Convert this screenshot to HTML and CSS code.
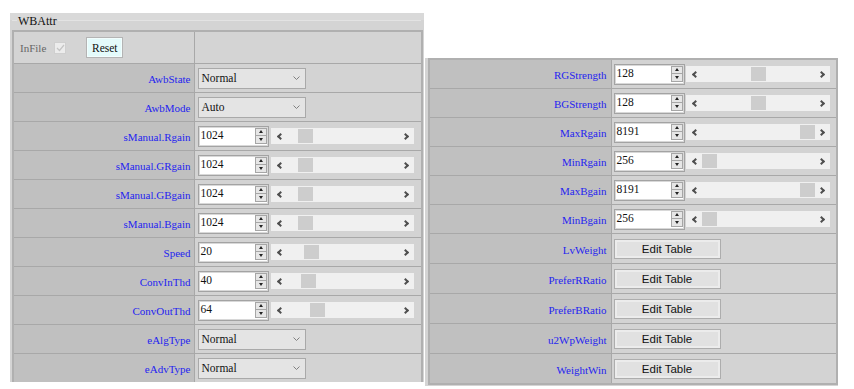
FILE: index.html
```html
<!DOCTYPE html>
<html lang="en">
<head>
    <meta charset="UTF-8">
    <title>WBAttr</title>
    <link rel="stylesheet" href="styles.css">
</head>
<body>
<div class="page">
    <!-- left column of the WB attribute block -->
    <div class="panel left-panel">
        <div class="legend"><span class="legend-line short"></span><span class="legend-text">WBAttr</span><span class="legend-line"></span></div>
        <table class="attr-table">
            <colgroup><col class="col-label"><col class="col-value"></colgroup>
            <tr class="head-row">
                <td class="head-cell">
                    <div class="head-items">
                        <span class="infile">InFile</span>
                        <span class="chk"><svg width="9" height="8" viewBox="0 0 9 8"><polyline points="1,4 3.5,6.5 8,1" fill="none" stroke="#c4c4c4" stroke-width="1.2"/></svg></span>
                        <button class="reset-btn">Reset</button>
                    </div>
                </td>
                <td class="head-value"></td>
            </tr>
            <tr>
                <td class="lbl">AwbState</td>
                <td class="val"><div class="select"><span>Normal</span><svg width="7" height="4" viewBox="0 0 7 4"><polyline points="0.5,0.5 3.5,3.5 6.5,0.5" fill="none" stroke="#808080" stroke-width="1"/></svg></div></td>
            </tr>
            <tr>
                <td class="lbl">AwbMode</td>
                <td class="val"><div class="select"><span>Auto</span><svg width="7" height="4" viewBox="0 0 7 4"><polyline points="0.5,0.5 3.5,3.5 6.5,0.5" fill="none" stroke="#808080" stroke-width="1"/></svg></div></td>
            </tr>
            <tr>
                <td class="lbl">sManual.Rgain</td>
                <td class="val"><div class="num-row"><div class="num-box"><span class="num-val">1024</span><span class="spin"><i class="up"></i><i class="down"></i></span></div><div class="bar"><span class="arr left"></span><span class="thumb" style="left:27px"></span><span class="arr right"></span></div></div></td>
            </tr>
            <tr>
                <td class="lbl">sManual.GRgain</td>
                <td class="val"><div class="num-row"><div class="num-box"><span class="num-val">1024</span><span class="spin"><i class="up"></i><i class="down"></i></span></div><div class="bar"><span class="arr left"></span><span class="thumb" style="left:27px"></span><span class="arr right"></span></div></div></td>
            </tr>
            <tr>
                <td class="lbl">sManual.GBgain</td>
                <td class="val"><div class="num-row"><div class="num-box"><span class="num-val">1024</span><span class="spin"><i class="up"></i><i class="down"></i></span></div><div class="bar"><span class="arr left"></span><span class="thumb" style="left:27px"></span><span class="arr right"></span></div></div></td>
            </tr>
            <tr>
                <td class="lbl">sManual.Bgain</td>
                <td class="val"><div class="num-row"><div class="num-box"><span class="num-val">1024</span><span class="spin"><i class="up"></i><i class="down"></i></span></div><div class="bar"><span class="arr left"></span><span class="thumb" style="left:27px"></span><span class="arr right"></span></div></div></td>
            </tr>
            <tr>
                <td class="lbl">Speed</td>
                <td class="val"><div class="num-row"><div class="num-box"><span class="num-val">20</span><span class="spin"><i class="up"></i><i class="down"></i></span></div><div class="bar"><span class="arr left"></span><span class="thumb" style="left:33px"></span><span class="arr right"></span></div></div></td>
            </tr>
            <tr>
                <td class="lbl">ConvInThd</td>
                <td class="val"><div class="num-row"><div class="num-box"><span class="num-val">40</span><span class="spin"><i class="up"></i><i class="down"></i></span></div><div class="bar"><span class="arr left"></span><span class="thumb" style="left:30px"></span><span class="arr right"></span></div></div></td>
            </tr>
            <tr>
                <td class="lbl">ConvOutThd</td>
                <td class="val"><div class="num-row"><div class="num-box"><span class="num-val">64</span><span class="spin"><i class="up"></i><i class="down"></i></span></div><div class="bar"><span class="arr left"></span><span class="thumb" style="left:39px"></span><span class="arr right"></span></div></div></td>
            </tr>
            <tr>
                <td class="lbl">eAlgType</td>
                <td class="val"><div class="select"><span>Normal</span><svg width="7" height="4" viewBox="0 0 7 4"><polyline points="0.5,0.5 3.5,3.5 6.5,0.5" fill="none" stroke="#808080" stroke-width="1"/></svg></div></td>
            </tr>
            <tr>
                <td class="lbl">eAdvType</td>
                <td class="val"><div class="select"><span>Normal</span><svg width="7" height="4" viewBox="0 0 7 4"><polyline points="0.5,0.5 3.5,3.5 6.5,0.5" fill="none" stroke="#808080" stroke-width="1"/></svg></div></td>
            </tr>
        </table>
    </div>

    <!-- right column -->
    <div class="panel right-panel">
        <table class="attr-table">
            <colgroup><col class="col-label-r"><col class="col-value-r"></colgroup>
            <tr>
                <td class="lbl">RGStrength</td>
                <td class="val"><div class="num-row"><div class="num-box"><span class="num-val">128</span><span class="spin"><i class="up"></i><i class="down"></i></span></div><div class="bar wide"><span class="arr left"></span><span class="thumb" style="left:65px"></span><span class="arr right"></span></div></div></td>
            </tr>
            <tr>
                <td class="lbl">BGStrength</td>
                <td class="val"><div class="num-row"><div class="num-box"><span class="num-val">128</span><span class="spin"><i class="up"></i><i class="down"></i></span></div><div class="bar wide"><span class="arr left"></span><span class="thumb" style="left:65px"></span><span class="arr right"></span></div></div></td>
            </tr>
            <tr>
                <td class="lbl">MaxRgain</td>
                <td class="val"><div class="num-row"><div class="num-box"><span class="num-val">8191</span><span class="spin"><i class="up"></i><i class="down"></i></span></div><div class="bar wide"><span class="arr left"></span><span class="thumb" style="left:114px"></span><span class="arr right"></span></div></div></td>
            </tr>
            <tr>
                <td class="lbl">MinRgain</td>
                <td class="val"><div class="num-row"><div class="num-box"><span class="num-val">256</span><span class="spin"><i class="up"></i><i class="down"></i></span></div><div class="bar wide"><span class="arr left"></span><span class="thumb" style="left:16px"></span><span class="arr right"></span></div></div></td>
            </tr>
            <tr>
                <td class="lbl">MaxBgain</td>
                <td class="val"><div class="num-row"><div class="num-box"><span class="num-val">8191</span><span class="spin"><i class="up"></i><i class="down"></i></span></div><div class="bar wide"><span class="arr left"></span><span class="thumb" style="left:114px"></span><span class="arr right"></span></div></div></td>
            </tr>
            <tr>
                <td class="lbl">MinBgain</td>
                <td class="val"><div class="num-row"><div class="num-box"><span class="num-val">256</span><span class="spin"><i class="up"></i><i class="down"></i></span></div><div class="bar wide"><span class="arr left"></span><span class="thumb" style="left:16px"></span><span class="arr right"></span></div></div></td>
            </tr>
            <tr class="btn-row">
                <td class="lbl">LvWeight</td>
                <td class="val"><button class="edit-btn">Edit Table</button></td>
            </tr>
            <tr class="btn-row">
                <td class="lbl">PreferRRatio</td>
                <td class="val"><button class="edit-btn">Edit Table</button></td>
            </tr>
            <tr class="btn-row">
                <td class="lbl">PreferBRatio</td>
                <td class="val"><button class="edit-btn">Edit Table</button></td>
            </tr>
            <tr class="btn-row">
                <td class="lbl">u2WpWeight</td>
                <td class="val"><button class="edit-btn">Edit Table</button></td>
            </tr>
            <tr class="btn-row">
                <td class="lbl">WeightWin</td>
                <td class="val"><button class="edit-btn">Edit Table</button></td>
            </tr>
        </table>
    </div>
</div>
</body>
</html>
```

FILE: styles.css
```css
body {
    margin: 0;
    padding: 13px 0 0 10px;
    background: white;
    font-family: "Liberation Serif", "Times New Roman", serif;
}
.page {
    display: flex;
    align-items: flex-start;
    gap: 1px;
}
.panel {
    background-color: #d4d4d4;
}
.left-panel {
    width: 414px;
    height: 369px;
    overflow: hidden;
    box-sizing: border-box;
    padding: 0 3px 0 2px;
    background: linear-gradient(#d9d9d9 0, #d9d9d9 7px, #d4d4d4 7px);
}
.legend {
    display: flex;
    align-items: center;
    height: 17px;
}
.legend-line {
    flex: 1;
    height: 1px;
    background-color: #e3e3e3;
    margin-top: -2px;
}
.legend-line.short {
    flex: none;
    width: 5px;
}
.legend-text {
    font-size: 12px;
    color: #111;
    padding: 0 1px;
}
.right-panel {
    margin-top: 45px;
    width: 413px;
    box-sizing: border-box;
    padding: 0 2px 1px 3px;
}
.attr-table {
    border-collapse: collapse;
    table-layout: fixed;
    border: 2px solid #b0b0b0;
    font-size: 11px;
    line-height: 12px;
}
.left-panel .attr-table {
    width: 409px;
}
.right-panel .attr-table {
    width: 408px;
}
.col-label { width: 181px; }
.col-value { width: 228px; }
.col-label-r { width: 182px; }
.col-value-r { width: 226px; }
.attr-table td {
    border: 1px solid #a8a8a8;
    height: 26px;
    padding: 0;
}
.head-row td {
    height: 31px;
    background-color: #d4d4d4;
}
.head-items {
    display: flex;
    align-items: center;
    padding-left: 6px;
}
.infile {
    font-size: 11px;
    color: #666;
}
.chk {
    display: flex;
    align-items: center;
    justify-content: center;
    width: 10px;
    height: 10px;
    margin-left: 8px;
    border: 1px solid #cfcfcf;
    background-color: #ececec;
}
.reset-btn {
    margin-left: 20px;
    width: 37px;
    height: 21px;
    padding: 0;
    font-family: "Liberation Serif", "Times New Roman", serif;
    font-size: 11.5px;
    color: #111;
    background-color: #e4fbfb;
    border: 1px solid #b4b4b4;
    box-shadow: inset 0 0 0 1px #f2fefe;
}
.attr-table td.lbl {
    background-color: #c0c0c0;
    text-align: right;
    color: #2424f0;
    padding: 2px 3px 0 0;
}
.right-panel .attr-table td.lbl {
    padding-right: 4px;
}
.attr-table td.val {
    background-color: #d3d3d3;
    padding-left: 3px;
}
.right-panel .attr-table td.val {
    padding-left: 2px;
}
.select {
    display: flex;
    align-items: center;
    justify-content: space-between;
    box-sizing: border-box;
    width: 108px;
    height: 21px;
    padding: 0 5px 0 3px;
    border: 1px solid #a9a9a9;
    background-color: #e4e4e4;
    font-size: 11.5px;
    color: #111;
}
.num-row {
    display: flex;
    align-items: center;
    gap: 2px;
}
.right-panel .num-row {
    gap: 1px;
}
.num-box {
    display: flex;
    justify-content: space-between;
    align-items: center;
    box-sizing: border-box;
    width: 71px;
    height: 21px;
    padding: 0 1px 0 2px;
    background-color: white;
    border: 1px solid #a3a3a3;
    box-shadow: inset 0 0 0 1px #d8d8d8;
}
.num-val {
    font-size: 11.5px;
    color: #111;
    margin-top: -2px;
}
.spin {
    display: flex;
    flex-direction: column;
    width: 12px;
}
.spin i {
    position: relative;
    height: 8px;
    background-color: #e6e6e6;
    border: 1px solid #a6a6a6;
    box-sizing: border-box;
}
.spin i.down {
    margin-top: -1px;
    height: 9px;
}
.spin i:after {
    content: '';
    position: absolute;
    left: 3px;
    top: 1px;
    border-left: 2.5px solid transparent;
    border-right: 2.5px solid transparent;
}
.spin i.up:after {
    border-bottom: 3px solid #222;
}
.spin i.down:after {
    top: 2px;
    border-top: 3px solid #222;
}
.bar {
    position: relative;
    display: flex;
    align-items: center;
    justify-content: space-between;
    box-sizing: border-box;
    width: 143px;
    height: 16px;
    padding: 0 6px 0 7px;
    background-color: #f0f0f0;
}
.bar.wide {
    width: 144px;
}
.arr {
    width: 5px;
    height: 5px;
    border-color: #4f4f4f;
    border-style: solid;
    border-width: 0;
    box-sizing: border-box;
}
.arr.left {
    border-left-width: 2px;
    border-top-width: 2px;
    transform: rotate(-45deg);
}
.arr.right {
    border-right-width: 2px;
    border-top-width: 2px;
    transform: rotate(45deg);
}
.thumb {
    position: absolute;
    top: 1px;
    width: 15px;
    height: 14px;
    background-color: #cdcdcd;
}
.btn-row td {
    height: 27px;
}
.edit-btn {
    width: 107px;
    height: 20px;
    padding: 0;
    font-family: "Liberation Sans", Arial, sans-serif;
    font-size: 11.5px;
    color: #111;
    background-color: #e1e1e1;
    border: 1px solid #adadad;
    box-shadow: inset 0 0 0 2px #ececec;
}
```
